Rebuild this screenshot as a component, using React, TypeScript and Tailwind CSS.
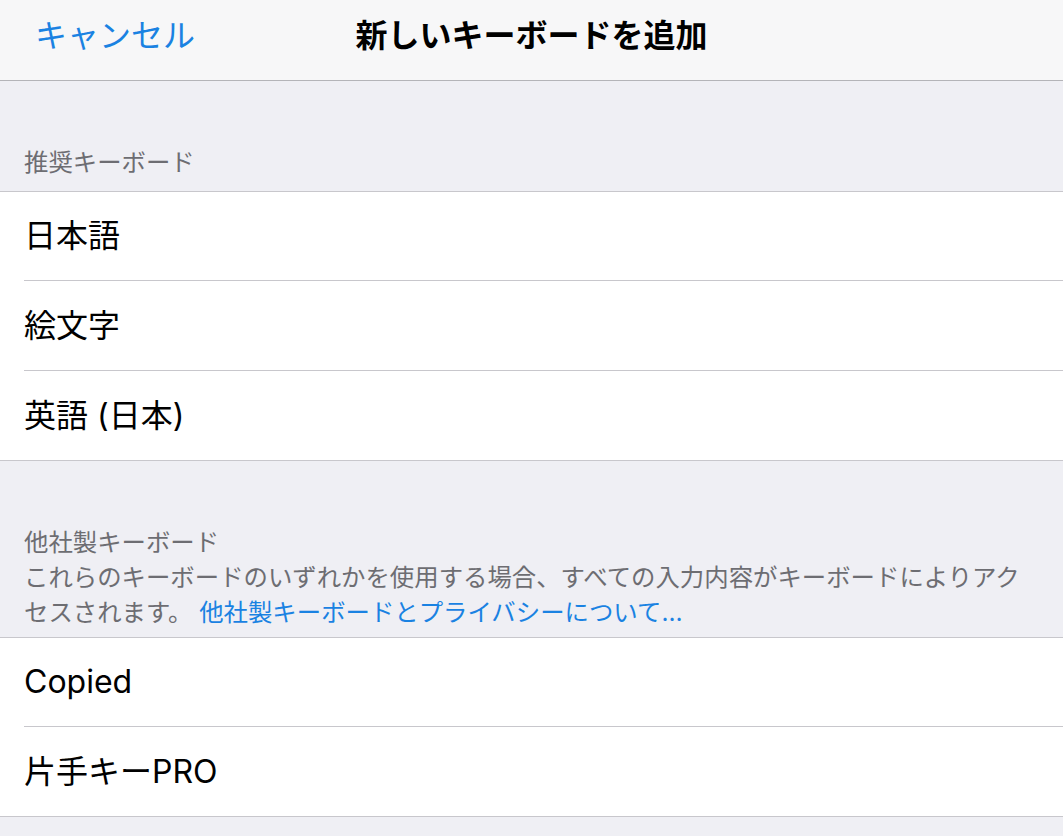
const font = { fontFamily: '"Inter", "Noto Sans CJK JP", sans-serif' };

const suggested = ['日本語', '絵文字', '英語 (日本)'];
const thirdParty = ['Copied', '片手キーPRO'];

function Rows({ items }: { items: string[] }) {
  return (
    <div className="bg-white border-y border-[#c8c7cc]">
      {items.map((item, idx) => (
        <div key={item}>
          <div
            className={`${idx === 0 ? 'h-[88px]' : 'h-[89px]'} pl-6 flex items-center text-[32px] text-black`}
          >
            {item}
          </div>
          {idx < items.length - 1 && <div className="ml-6 h-px bg-[#c8c7cc]" />}
        </div>
      ))}
    </div>
  );
}

export default function App() {
  return (
    <div className="w-[1063px] h-[836px] overflow-hidden bg-[#efeff4]" style={font}>
      {/* Nav bar */}
      <div className="relative h-[81px] bg-[#f7f7f8] border-b border-[#b4b4b8] flex items-start justify-center pt-[16px]">
        <button className="absolute left-[35px] top-[16px] text-[32px] leading-[40px] text-[#1a82e2]">
          キャンセル
        </button>
        <h1 className="text-[32px] leading-[40px] font-bold text-black">新しいキーボードを追加</h1>
      </div>

      {/* Suggested */}
      <div className="pl-6 pt-[64px] pb-[11px] text-[24.4px] leading-[35px] text-[#6d6d72]">推奨キーボード</div>
      <Rows items={suggested} />

      {/* Third-party */}
      <div className="pl-6 pr-[30px] pt-[64px] pb-[7px] text-[24.4px] leading-[35px] text-[#6d6d72]">
        <div>他社製キーボード</div>
        <div>
          これらのキーボードのいずれかを使用する場合、すべての入力内容がキーボードによりアクセスされます。{' '}
          <span className="text-[#1a82e2]">他社製キーボードとプライバシーについて…</span>
        </div>
      </div>
      <Rows items={thirdParty} />
    </div>
  );
}
